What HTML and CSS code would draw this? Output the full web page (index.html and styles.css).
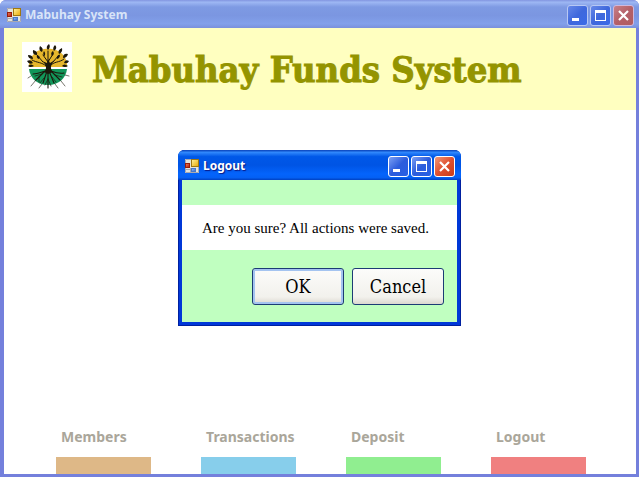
FILE: index.html
```html
<!DOCTYPE html>
<html lang="en">
<head>
<meta charset="utf-8">
<title>Mabuhay System</title>
<link rel="stylesheet" href="styles.css">
</head>
<body>
<svg class="defs" aria-hidden="true">
  <defs>
    <linearGradient id="gold" x1="0" y1="0" x2="1" y2="1"><stop offset="0" stop-color="#fff3a0"/><stop offset="1" stop-color="#e8a800"/></linearGradient>
    <linearGradient id="red" x1="0" y1="0" x2="1" y2="1"><stop offset="0" stop-color="#f08060"/><stop offset="1" stop-color="#b01800"/></linearGradient>
    <linearGradient id="blue" x1="0" y1="0" x2="1" y2="1"><stop offset="0" stop-color="#a0c4ff"/><stop offset="1" stop-color="#2c62c8"/></linearGradient>
    <symbol id="form-icon" viewBox="0 0 14 14">
      <rect x="0" y="0" width="14" height="14" fill="#e4e4dc"/>
      <path d="M0.5 4V0.5H6M0.5 9V13.5H13.5V8M5.500 9V13M0 10.500H5" fill="none" stroke="#a8a8b0"/>
      <rect x="6.500" y="0.500" width="7" height="7" fill="url(#gold)" stroke="#a07810"/>
      <rect x="0.500" y="4.500" width="4" height="4" fill="url(#red)" stroke="#981c08"/>
      <rect x="6.500" y="9.500" width="4" height="3" fill="url(#blue)" stroke="#4878c8"/>
    </symbol>
    <symbol id="min" viewBox="0 0 21 21"><path d="M5 13H12V16H5Z" fill="#fff"/></symbol>
    <symbol id="max" viewBox="0 0 21 21"><path fill-rule="evenodd" d="M5 5H16V16H5ZM6 8V15H15V8Z" fill="#fff"/></symbol>
    <symbol id="close" viewBox="0 0 21 21"><path d="M6 6L15 15M15 6L6 15" stroke="#fff" stroke-width="2.200"/></symbol>
  </defs>
</svg>
<div class="window window-main">
  <header class="titlebar">
    <svg class="app-icon" aria-hidden="true"><use href="#form-icon"/></svg>
    <span class="caption">Mabuhay System</span>
    <button class="ctl" aria-label="Minimize"><svg><use href="#min"/></svg></button>
    <button class="ctl" aria-label="Maximize"><svg><use href="#max"/></svg></button>
    <button class="ctl ctl-close" aria-label="Close"><svg><use href="#close"/></svg></button>
  </header>
  <main class="client">
    <div class="banner">
      <svg class="logo" viewBox="0 0 50 50" role="img" aria-label="Tree logo">
        <rect width="50" height="50" fill="#fff"/>
        <path d="M7 25C6 19 11 10 18 8Q26 5 34 8C42 11 46 19 45 25Z" fill="#e6b62c"/>
        <path d="M7 27H45C44 36 37 43 26 43S8 36 7 27Z" fill="#12965a"/>
        <g fill="none" stroke="#1c180c" stroke-linecap="round">
          <path d="M26 20L21 13M26 20L31 12M26 19L26 9M24 24C20 20 15 21 10 18M28 24C32 19 37 21 42 17M21 20L15 13M31 20L37 13"/>
          <path d="M23 29Q15 32 11 32M23 29L14 38M25 29L21 41M26 29L26 46M27 29L32 41M29 29L38 38M29 29Q37 32 42 31" stroke-width="1.100"/>
          <path d="M17 35V40M20 32L13 34M22 36L18 41M30 35L34 40M33 33L40 35M26 37L23 43M26 37L29 44" stroke-width="0.700"/>
          <path d="M14 38L9 44M20 42L17 46M33 42L36 46M39 39L43 44M6 36L9 34M43 33L47 34" stroke-width="0.600"/>
        </g>
        <path d="M22 30C25 27 25 23 20 19L25 21L26 17L28 21L33 18C28 23 28 27 31 30L26 32Z" fill="#1c180c"/>
        <g fill="#1c180c">
          <path d="M26 8Q23 5 27 2Q29 5 26 8ZM20 10Q16 8 18 4Q22 6 20 10ZM32 9Q30 6 33 3Q36 6 32 9ZM15 13Q10 13 11 8Q16 9 15 13ZM37 12Q35 8 40 6Q41 10 37 12ZM11 17Q6 17 6 13Q11 13 11 17ZM41 16Q41 11 46 12Q45 16 41 16ZM11 21Q7 23 5 19Q9 17 11 21ZM42 21Q43 17 47 19Q46 22 42 21ZM12 24Q8 26 6 24Q9 21 12 24ZM40 24Q42 21 46 24Q43 26 40 24Z"/>
          <path d="M23 14Q20 13 22 9Q24 11 23 14ZM30 14Q28 11 31 9Q33 12 30 14ZM17 17Q14 16 15 13Q19 14 17 17ZM35 17Q34 13 38 13Q38 16 35 17Z"/>
        </g>
      </svg>
      <h1>Mabuhay Funds System</h1>
    </div>
    <nav class="menu">
      <a class="item members" href="#">Members</a>
      <a class="item transactions" href="#">Transactions</a>
      <a class="item deposit" href="#">Deposit</a>
      <a class="item logout" href="#">Logout</a>
    </nav>
  </main>
</div>
<div class="overlay">
  <section class="window window-dialog" role="dialog" aria-labelledby="dlg-title">
    <header class="titlebar">
      <svg class="app-icon" aria-hidden="true"><use href="#form-icon"/></svg>
      <span class="caption" id="dlg-title">Logout</span>
      <button class="ctl" aria-label="Minimize"><svg><use href="#min"/></svg></button>
      <button class="ctl" aria-label="Maximize"><svg><use href="#max"/></svg></button>
      <button class="ctl ctl-close" aria-label="Close"><svg><use href="#close"/></svg></button>
    </header>
    <div class="dialog-body">
      <p class="message">Are you sure? All actions were saved.</p>
      <div class="actions">
        <button class="btn btn-default">OK</button>
        <button class="btn">Cancel</button>
      </div>
    </div>
  </section>
</div>
</body>
</html>
```
FILE: styles.css
```css
* {
  box-sizing: border-box;
}

body {
  margin: 0;
  background: #fff;
  font-family: "Liberation Sans", sans-serif;
}

.defs {
  position: absolute;
  width: 0;
  height: 0;
}

.window {
  display: flex;
  flex-direction: column;
}

.window-main {
  min-height: 100vh;
  background: #7480dc;
  border-radius: 6px 6px 0 0;
}

.titlebar {
  display: flex;
  align-items: center;
  gap: 2px;
  height: 28px;
  padding: 2px 5px 0 7px;
  border-radius: 6px 6px 0 0;
  background: linear-gradient(#8295e0 0, #9db7f3 8%, #7e9ae3 25%, #7b96e1 55%, #82a0ea 85%, #7a90dc 100%);
}

.app-icon {
  width: 14px;
  height: 14px;
  flex: none;
}

.caption {
  flex: 1;
  padding-left: 2px;
  font: bold 12px/18px "Noto Sans", sans-serif;
  color: #d8e4f8;
}

.ctl {
  width: 21px;
  height: 21px;
  flex: none;
  padding: 0;
  border: 1px solid #b8c8f4;
  border-radius: 3px;
  background: linear-gradient(135deg, #6688e8, #3f68dc 50%, #3a6ae8);
}

.ctl svg {
  display: block;
  width: 21px;
  height: 21px;
  margin: -1px;
}

.ctl-close {
  border-color: #d0b8dc;
  background: linear-gradient(135deg, #c88088, #b46068 50%, #b05c60);
}

.client {
  flex: 1;
  display: flex;
  flex-direction: column;
  justify-content: space-between;
  margin: 0 3px 3px 4px;
  background: #fff;
}

.banner {
  display: flex;
  align-items: center;
  gap: 20px;
  height: 82px;
  padding: 0 18px 4px;
  background: #ffffc0;
}

.logo {
  width: 50px;
  height: 50px;
  flex: none;
}

h1 {
  margin: 0;
  padding-top: 4px;
  font: bold 36px/44px "DejaVu Serif Condensed", "DejaVu Serif", serif;
  color: #949400;
  -webkit-text-stroke: 1px #949400;
}

.menu {
  display: flex;
  justify-content: space-between;
  padding: 0 50px 0 52px;
}

.item {
  width: 95px;
  height: 46px;
  padding-left: 5px;
  border-bottom: 17px solid;
  font: bold 14px/18px "Noto Sans", sans-serif;
  color: #aaa69a;
  text-decoration: none;
}

.members {
  border-color: #deb887;
}

.transactions {
  border-color: #87ceeb;
}

.deposit {
  border-color: #90ee90;
}

.logout {
  border-color: #f08080;
}

.overlay {
  position: absolute;
  inset: 0;
  display: grid;
  place-items: center;
  padding-bottom: 2px;
}

.window-dialog {
  width: 283px;
  border-radius: 7px 7px 0 0;
  background: #0038d8;
  box-shadow: inset 0 0 0 1px #0020a0;
}

.window-dialog .titlebar {
  height: 30px;
  padding: 3px 6px 0 7px;
  background: linear-gradient(#0840b8 0, #3088fc 8%, #0058e8 22%, #0054e4 50%, #0464fc 80%, #0460f4 92%, #0040c0 100%);
}

.window-dialog .caption {
  color: #fff;
  text-shadow: 1px 1px 1px #0a1883;
}

.window-dialog .ctl {
  border-color: #fff;
  background: linear-gradient(135deg, #7ca0f4, #2c5cdc 50%, #2860e4);
}

.window-dialog .ctl-close {
  background: linear-gradient(135deg, #f09878, #e05030 50%, #c83c18);
}

.dialog-body {
  margin: 0 4px 4px;
  padding: 25px 0 17px;
  background: #c0ffc0;
}

.message {
  margin: 0 0 18px;
  padding: 13px 20px 12px;
  background: #fff;
  font: 15px/20px "Liberation Serif", serif;
  color: #000;
  white-space: nowrap;
}

.actions {
  display: flex;
  justify-content: flex-end;
  gap: 8px;
  padding-right: 13px;
}

.btn {
  width: 92px;
  height: 37px;
  padding: 2px 0 0;
  border: 1px solid #1c3c74;
  border-radius: 3px;
  background: linear-gradient(#fcfcfa, #f2f1ec 80%, #dcd8d0);
  font: 18px/24px "DejaVu Serif Condensed", "DejaVu Serif", serif;
  color: #000;
}

.btn-default {
  box-shadow: inset 0 0 0 2px #a4c4f0;
}
```
